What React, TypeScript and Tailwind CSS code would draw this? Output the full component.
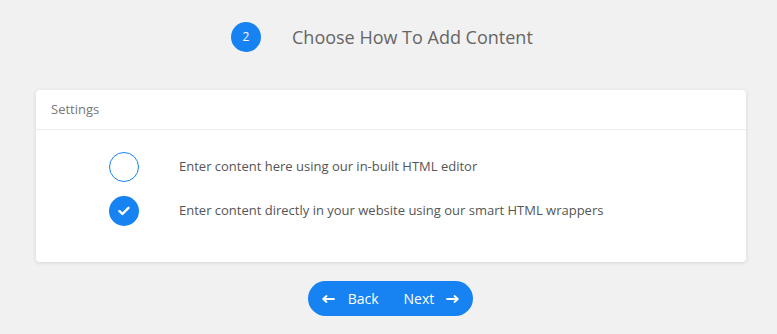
import React, { useState } from 'react';

const font = { fontFamily: '"Open Sans", "Noto Sans", sans-serif' };

function Radio({ checked }: { checked: boolean }) {
  return checked ? (
    <span className="flex h-[30px] w-[30px] shrink-0 items-center justify-center rounded-full bg-[#1783f2]">
      <svg width="12" height="10" viewBox="0 0 12 10" fill="none">
        <path d="M1.5 5.2 4.4 8 10.5 1.8" stroke="white" strokeWidth="2.4" strokeLinecap="round" strokeLinejoin="round" />
      </svg>
    </span>
  ) : (
    <span className="h-[30px] w-[30px] shrink-0 rounded-full border border-[#1783f2] bg-white" />
  );
}

export default function App() {
  const [mode, setMode] = useState(1);
  const options = [
    'Enter content here using our in-built HTML editor',
    'Enter content directly in your website using our smart HTML wrappers',
  ];

  return (
    <div className="min-h-[334px] w-full bg-[#f1f1f1] pt-[22px]" style={font}>
      <div className="flex items-center pl-[231px]">
        <div className="flex h-[30px] w-[30px] items-center justify-center rounded-full bg-[#1783f2] text-[12px] text-white">
          2
        </div>
        <h2 className="ml-[31px] text-[18px] text-[#666]">Choose How To Add Content</h2>
      </div>

      <div className="ml-[36px] mt-[38px] w-[710px] rounded-[4px] bg-white shadow-[0_1px_4px_rgba(0,0,0,0.12)]">
        <div className="border-b border-[#ececec] px-[15px] pb-[10px] pt-[10px] text-[13px] leading-[19px] text-[#777]">
          Settings
        </div>
        <div className="flex flex-col gap-[14px] pb-[36px] pl-[73px] pt-[22px]">
          {options.map((label, i) => (
            <button
              key={i}
              onClick={() => setMode(i)}
              className="flex items-center text-left"
            >
              <Radio checked={mode === i} />
              <span className="ml-[40px] text-[13px] text-[#555]">{label}</span>
            </button>
          ))}
        </div>
      </div>

      <div className="mt-[19px] flex justify-center pl-[4px]">
        <div className="flex h-[35px] items-center rounded-full bg-[#1783f2] px-[14px] text-[14px] text-white">
          <button className="flex items-center">
            <svg width="13" height="8" viewBox="0 0 13 8" fill="none">
              <path d="M12 4H1.5M4.5 1 1.2 4 4.5 7" stroke="white" strokeWidth="1.8" strokeLinecap="round" strokeLinejoin="round" />
            </svg>
            <span className="ml-[13px]">Back</span>
          </button>
          <button className="ml-[25px] flex items-center">
            <span>Next</span>
            <svg className="ml-[12px]" width="13" height="8" viewBox="0 0 13 8" fill="none">
              <path d="M1 4h10.5M8.5 1l3.3 3-3.3 3" stroke="white" strokeWidth="1.8" strokeLinecap="round" strokeLinejoin="round" />
            </svg>
          </button>
        </div>
      </div>
    </div>
  );
}
